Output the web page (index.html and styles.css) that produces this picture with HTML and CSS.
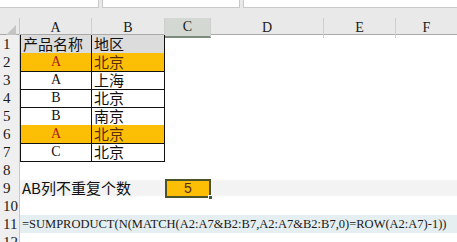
FILE: index.html
```html
<!DOCTYPE html>
<html>
<head>
<meta charset="utf-8">
<link rel="stylesheet" href="styles.css">
</head>
<body>
<div class="topbar">
  <div class="box box1"></div>
  <div class="box box2"></div>
  <div class="box box3"></div>
</div>
<div class="sheet">
  <div class="row head">
    <div class="corner"><span class="tri"></span></div>
    <div class="ch">A</div>
    <div class="ch">B</div>
    <div class="ch sel">C</div>
    <div class="ch">D</div>
    <div class="ch">E</div>
    <div class="ch last">F</div>
  </div>
  <div class="row">
    <div class="rn">1</div>
    <div class="c tb tl tt gray cjk">产品名称</div>
    <div class="c tb tt gray cjk">地区</div>
    <div class="c"></div><div class="c"></div><div class="c"></div><div class="c"></div>
  </div>
  <div class="row">
    <div class="rn">2</div>
    <div class="c tb tl hl ctr lat red">A</div>
    <div class="c tb hl cjk brown">北京</div>
    <div class="c"></div><div class="c"></div><div class="c"></div><div class="c"></div>
  </div>
  <div class="row">
    <div class="rn">3</div>
    <div class="c tb tl ctr lat">A</div>
    <div class="c tb cjk">上海</div>
    <div class="c"></div><div class="c"></div><div class="c"></div><div class="c"></div>
  </div>
  <div class="row">
    <div class="rn">4</div>
    <div class="c tb tl ctr lat">B</div>
    <div class="c tb cjk">北京</div>
    <div class="c"></div><div class="c"></div><div class="c"></div><div class="c"></div>
  </div>
  <div class="row">
    <div class="rn">5</div>
    <div class="c tb tl ctr lat">B</div>
    <div class="c tb cjk">南京</div>
    <div class="c"></div><div class="c"></div><div class="c"></div><div class="c"></div>
  </div>
  <div class="row">
    <div class="rn">6</div>
    <div class="c tb tl hl ctr lat red">A</div>
    <div class="c tb hl cjk brown">北京</div>
    <div class="c"></div><div class="c"></div><div class="c"></div><div class="c"></div>
  </div>
  <div class="row">
    <div class="rn">7</div>
    <div class="c tb tl ctr lat">C</div>
    <div class="c tb cjk">北京</div>
    <div class="c"></div><div class="c"></div><div class="c"></div><div class="c"></div>
  </div>
  <div class="row">
    <div class="rn">8</div>
    <div class="c"></div><div class="c"></div><div class="c"></div><div class="c"></div><div class="c"></div><div class="c"></div>
  </div>
  <div class="row band9">
    <div class="rn">9</div>
    <div class="c cjk over">AB列不重复个数</div>
    <div class="c"></div>
    <div class="c active"><span class="val">5</span><span class="handle"></span></div>
    <div class="c"></div><div class="c"></div><div class="c"></div>
  </div>
  <div class="row">
    <div class="rn">10</div>
    <div class="c"></div><div class="c"></div><div class="c"></div><div class="c"></div><div class="c"></div><div class="c"></div>
  </div>
  <div class="row band11">
    <div class="rn">11</div>
    <div class="c formula">=SUMPRODUCT(N(MATCH(A2:A7&amp;B2:B7,A2:A7&amp;B2:B7,0)=ROW(A2:A7)-1))</div>
  </div>
  <div class="row last12">
    <div class="rn">12</div>
    <div class="c"></div><div class="c"></div><div class="c"></div><div class="c"></div><div class="c"></div><div class="c"></div>
  </div>
</div>
</body>
</html>
```
FILE: styles.css
```css
* { box-sizing: border-box; }
html, body { margin: 0; padding: 0; }
body {
  width: 457px;
  height: 242px;
  overflow: hidden;
  background: #ffffff;
  font-family: "Liberation Serif", serif;
}
.topbar {
  height: 18px;
  background: #e9e9e9;
  display: flex;
  align-items: flex-start;
  gap: 3px;
}
.box {
  height: 8px;
  background: #ffffff;
  border-bottom: 1px solid #c9c9c9;
}
.box1 { width: 99px; border-right: 1px solid #c9c9c9; }
.box2 { width: 138px; border-left: 1px solid #c9c9c9; border-right: 1px solid #c9c9c9; }
.box3 { flex: 1; border-left: 1px solid #c9c9c9; }

.sheet { display: flex; flex-direction: column; }
.row {
  display: grid;
  grid-template-columns: 20px 72px 73px 46px 113px 72px 61px;
  height: 18px;
}
.row.head {
  height: 17px;
  background: #e9e9e9;
  border-bottom: 1px solid #a9a9a9;
}
.corner { position: relative; border-right: 1px solid #c8c8c8; }
.tri {
  position: absolute;
  right: 3px;
  bottom: 3px;
  width: 0;
  height: 0;
  border-left: 10px solid transparent;
  border-bottom: 10px solid #c4c4c4;
}
.ch {
  font-family: "Liberation Serif", serif;
  font-size: 14px;
  color: #1a1a1a;
  text-align: center;
  line-height: 19px;
  border-right: 1px solid #cfcfcf;
}
.ch.last { border-right: none; }
.ch.sel {
  background: #d4d8d3;
  border-bottom: 2px solid #7d8a7d;
  line-height: 18px;
}
.rn {
  background: #efefef;
  border-right: 1px solid #c8c8c8;
  border-bottom: 1px solid #dadada;
  font-family: "Liberation Serif", serif;
  font-size: 15px;
  line-height: 18px;
  padding-left: 3px;
  color: #1a1a1a;
}
.c {
  font-size: 14px;
  line-height: 17px;
  color: #111;
  white-space: nowrap;
}
.cjk {
  font-family: "Noto Sans CJK SC", sans-serif;
  font-size: 15px;
  padding-left: 2px;
  line-height: 17px;
}
.lat { font-family: "Liberation Serif", serif; font-size: 14px; line-height: 18px; }
.ctr { text-align: center; }
.tb { border-right: 1px solid #111; border-bottom: 1px solid #111; }
.tl { border-left: 1px solid #111; }
.gray { background: #dcdcdc; }
.hl { background: #fcbf05; }
.red { color: #a8241a; }
.brown { color: #5a2c10; }
.over { position: relative; z-index: 1; }
.band9 { background: linear-gradient(#ffffff 0, #f3f3f3 2px, #f3f3f3 16px, #ffffff 18px); }
.band9 .rn { background: #efefef; }
.active {
  position: relative;
  background: #fcbf05;
  border: 2px solid #4a5428;
  text-align: center;
  font-family: "Liberation Sans", sans-serif;
  font-size: 14px;
  line-height: 14px;
  color: #5a2c10;
}
.handle {
  position: absolute;
  right: -4px;
  bottom: -4px;
  width: 5px;
  height: 5px;
  background: #3f5a3a;
  border: 1px solid #ffffff;
}
.band11 { background: #e5eef0; grid-template-columns: 20px 1fr; }
.formula {
  font-family: "Liberation Serif", serif;
  font-size: 12.5px;
  line-height: 18px;
  padding-left: 2px;
  color: #1a1a1a;
}
.last12 { height: 9px; overflow: hidden; }
```
